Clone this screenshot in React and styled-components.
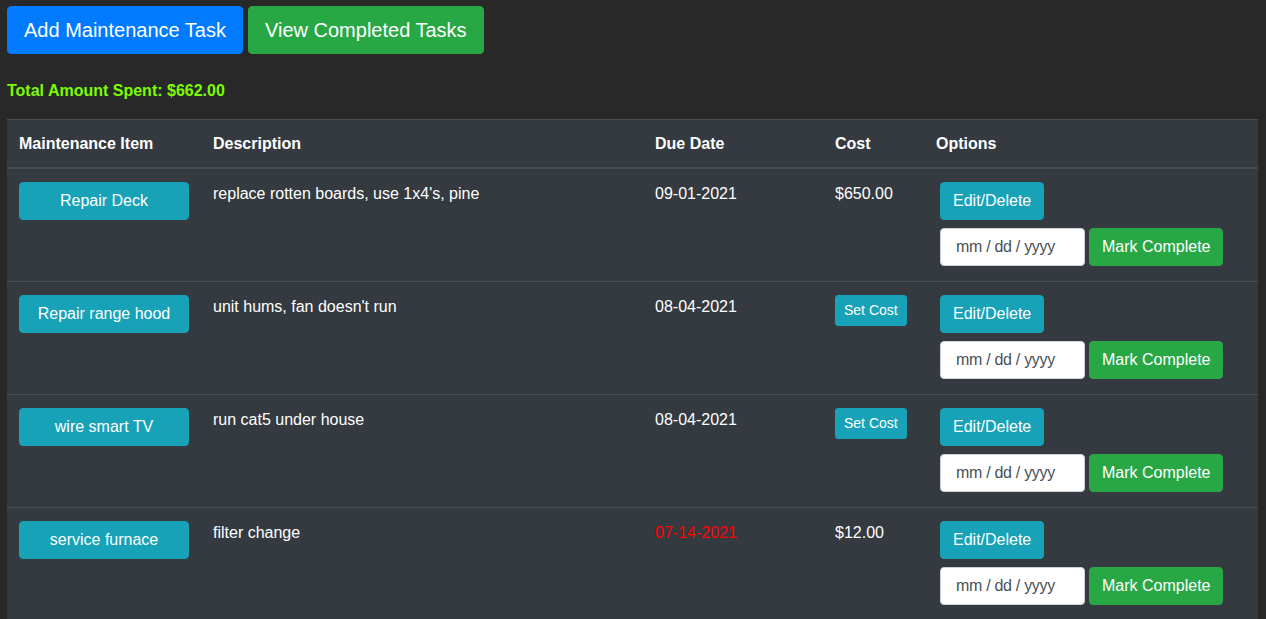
import styled, { createGlobalStyle } from "styled-components";

const GlobalStyle = createGlobalStyle`
  body {
    margin: 0;
    background: #282828;
    font-family: "Liberation Sans", Arial, sans-serif;
    font-size: 16px;
    line-height: 1.5;
    color: #fff;
  }
`;

const Page = styled.div`
  padding: 6px 8px 0 7px;
`;

const TopBar = styled.div`
  display: flex;
  gap: 5px;
`;

const BigButton = styled.button`
  font-family: inherit;
  font-size: 20px;
  line-height: 1.5;
  padding: 8px 16px;
  border: 1px solid ${(p) => p.$bg};
  background: ${(p) => p.$bg};
  color: #fff;
  border-radius: 4px;
`;

const Total = styled.div`
  margin-top: 27px;
  font-weight: bold;
  color: #7cfc00;
  line-height: 20px;
`;

const Table = styled.table`
  margin-top: 18px;
  width: 100%;
  table-layout: fixed;
  border-collapse: collapse;
  background: #343a40;
  color: #fff;
`;

const Th = styled.th`
  text-align: left;
  padding: 12px 12px 11px;
  border-top: 1px solid #454d55;
  border-bottom: 2px solid #454d55;
  width: ${(p) => p.$w || "auto"};
`;

const Td = styled.td`
  vertical-align: top;
  padding: 13px 12px 11px;
  border-top: 1px solid #454d55;
  color: ${(p) => (p.$late ? "#ff0000" : "#fff")};
`;

const Btn = styled.button`
  font-family: inherit;
  font-size: 16px;
  line-height: 1.5;
  padding: 6px 12px;
  border: 1px solid ${(p) => p.$bg};
  background: ${(p) => p.$bg};
  color: #fff;
  border-radius: 4px;
  white-space: nowrap;
`;

const ItemButton = styled(Btn)`
  width: 170px;
  display: block;
`;

const SmallButton = styled(Btn)`
  font-size: 14px;
  padding: 4px 8px;
  border-radius: 3px;
`;

const Options = styled.div`
  display: flex;
  flex-direction: column;
  align-items: flex-start;
  gap: 8px;
  padding: 0 0 4px 4px;
`;

const CompleteRow = styled.div`
  display: flex;
  gap: 4px;
`;

const DateInput = styled.input`
  width: 145px;
  height: 38px;
  box-sizing: border-box;
  font-family: inherit;
  font-size: 16px;
  letter-spacing: -0.3px;
  color: #495057;
  background: #fff;
  border: 1px solid #ced4da;
  border-radius: 4px;
  padding: 6px 12px 6px 15px;
  &::placeholder {
    color: #495057;
    opacity: 1;
  }
`;

const tasks = [
  { item: "Repair Deck", desc: "replace rotten boards, use 1x4's, pine", due: "09-01-2021", cost: "$650.00" },
  { item: "Repair range hood", desc: "unit hums, fan doesn't run", due: "08-04-2021" },
  { item: "wire smart TV", desc: "run cat5 under house", due: "08-04-2021" },
  { item: "service furnace", desc: "filter change", due: "07-14-2021", cost: "$12.00", late: true },
];

export default function App() {
  return (
    <>
      <GlobalStyle />
      <Page>
        <TopBar>
          <BigButton $bg="#007bff">Add Maintenance Task</BigButton>
          <BigButton $bg="#28a745">View Completed Tasks</BigButton>
        </TopBar>
        <Total>Total Amount Spent: $662.00</Total>
        <Table>
          <thead>
            <tr>
              <Th $w="170px">Maintenance Item</Th>
              <Th $w="418px">Description</Th>
              <Th $w="156px">Due Date</Th>
              <Th $w="77px">Cost</Th>
              <Th>Options</Th>
            </tr>
          </thead>
          <tbody>
            {tasks.map((t) => (
              <tr key={t.item}>
                <Td>
                  <ItemButton $bg="#17a2b8">{t.item}</ItemButton>
                </Td>
                <Td>{t.desc}</Td>
                <Td $late={t.late}>{t.due}</Td>
                <Td>
                  {t.cost ? t.cost : <SmallButton $bg="#17a2b8">Set Cost</SmallButton>}
                </Td>
                <Td>
                  <Options>
                    <Btn $bg="#17a2b8">Edit/Delete</Btn>
                    <CompleteRow>
                      <DateInput type="text" placeholder="mm / dd / yyyy" />
                      <Btn $bg="#28a745">Mark Complete</Btn>
                    </CompleteRow>
                  </Options>
                </Td>
              </tr>
            ))}
          </tbody>
        </Table>
      </Page>
    </>
  );
}
